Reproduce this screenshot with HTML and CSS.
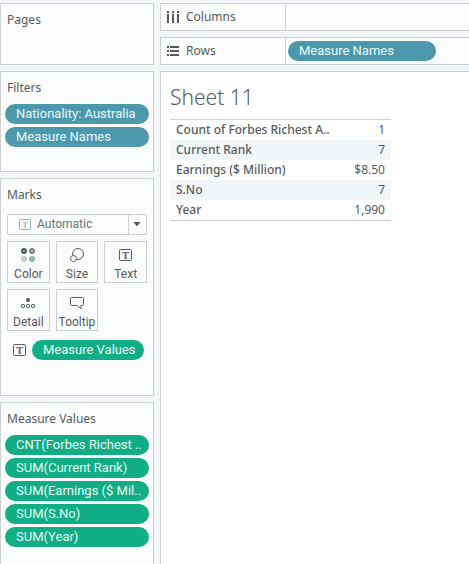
FILE: index.html
```html
<!DOCTYPE html>
<html lang="en">
<head>
<meta charset="utf-8">
<title>Sheet 11</title>
<link rel="stylesheet" href="styles.css">
</head>
<body>
<div class="workspace">
  <aside class="sidebar">
    <section class="card pages">
      <h2 class="card-title">Pages</h2>
    </section>
    <section class="card filters">
      <h2 class="card-title">Filters</h2>
      <div class="pills">
        <button class="pill blue">Nationality: Australia</button>
        <button class="pill blue">Measure Names</button>
      </div>
    </section>
    <section class="card marks">
      <h2 class="card-title">Marks</h2>
      <div class="mark-type">
        <svg class="type-icon" width="12" height="12" viewBox="0 0 12 12" aria-hidden="true"><rect x=".5" y=".5" width="11" height="10" rx="1"/><text x="6" y="9">T</text></svg>
        <select class="type-select" aria-label="Mark type"><option>Automatic</option></select>
        <svg class="caret" width="8" height="5" viewBox="0 0 8 5" aria-hidden="true"><path d="M.5 0h7L4 4.500z"/></svg>
      </div>
      <div class="tiles">
        <button class="tile">
          <svg width="16" height="16" viewBox="0 0 16 16" aria-hidden="true"><circle cx="4" cy="4" r="3" fill="#555b5d"/><circle cx="12" cy="4" r="3" fill="#748484"/><circle cx="4" cy="12" r="3" fill="#c3c9c8"/><circle cx="12" cy="12" r="3" fill="#8bb5b0"/><path d="M3 4h2M11 4h2M12 3v2M3 12h2" stroke="#d5dddd" fill="none"/></svg>
          <span>Color</span>
        </button>
        <button class="tile">
          <svg class="line" width="16" height="16" viewBox="0 0 16 16" aria-hidden="true"><circle cx="9" cy="7" r="5.500"/><circle cx="4.500" cy="11.500" r="3" fill="#fafcfc"/></svg>
          <span>Size</span>
        </button>
        <button class="tile">
          <svg class="line" width="16" height="16" viewBox="0 0 16 16" aria-hidden="true"><rect x="1.500" y="2.500" width="12" height="11" rx="1"/><text x="7.500" y="11.500">T</text></svg>
          <span>Text</span>
        </button>
        <button class="tile">
          <svg class="line" width="16" height="16" viewBox="0 0 16 16" aria-hidden="true"><circle cx="8" cy="5" r="2" fill="#555b5d" stroke="none"/><circle cx="3" cy="11" r="1.700"/><circle cx="8" cy="11" r="1.700"/><circle cx="13" cy="11" r="1.700"/></svg>
          <span>Detail</span>
        </button>
        <button class="tile">
          <svg class="line" width="16" height="16" viewBox="0 0 16 16" aria-hidden="true"><path d="M2.500 2.500h11q1 0 1 1v6q0 1-1 1h-1.500v3.500l-3.500-3.500h-6q-1 0-1-1v-6q0-1 1-1z"/></svg>
          <span>Tooltip</span>
        </button>
      </div>
      <div class="mark-row">
        <svg class="line" width="14" height="14" viewBox="0 0 14 14" aria-hidden="true"><rect x=".5" y="1.500" width="12" height="11" rx="1"/><text x="6.500" y="10.500">T</text></svg>
        <button class="pill green">Measure Values</button>
      </div>
    </section>
    <section class="card values">
      <h2 class="card-title">Measure Values</h2>
      <div class="pills">
        <button class="pill green">CNT(Forbes Richest ..</button>
        <button class="pill green">SUM(Current Rank)</button>
        <button class="pill green">SUM(Earnings ($ Mil..</button>
        <button class="pill green">SUM(S.No)</button>
        <button class="pill green">SUM(Year)</button>
      </div>
    </section>
  </aside>
  <main class="main">
    <section class="shelf">
      <h2 class="shelf-name">
        <svg width="12" height="12" viewBox="0 0 12 12" aria-hidden="true"><path d="M0 0h2v2H0zM5 0h2v2H5zM10 0h2v2h-2zM0 3h2v9H0zM5 3h2v9H5zM10 3h2v9h-2z"/></svg>
        Columns
      </h2>
      <div class="shelf-drop"></div>
    </section>
    <section class="shelf">
      <h2 class="shelf-name">
        <svg width="12" height="12" viewBox="0 0 12 12" aria-hidden="true"><path d="M0 1h2v2H0zM0 5h2v2H0zM0 9h2v2H0zM3 1h9v2H3zM3 5h9v2H3zM3 9h9v2H3z"/></svg>
        Rows
      </h2>
      <div class="shelf-drop"><button class="pill blue">Measure Names</button></div>
    </section>
    <section class="sheet">
      <h1 class="sheet-title">Sheet 11</h1>
      <table class="data">
        <tbody>
          <tr><th scope="row">Count of Forbes Richest A..</th><td>1</td></tr>
          <tr><th scope="row">Current Rank</th><td>7</td></tr>
          <tr><th scope="row">Earnings ($ Million)</th><td>$8.50</td></tr>
          <tr><th scope="row">S.No</th><td>7</td></tr>
          <tr><th scope="row">Year</th><td>1,990</td></tr>
        </tbody>
      </table>
    </section>
  </main>
</div>
</body>
</html>
```
FILE: styles.css
```css
* { box-sizing: border-box; }
body {
  margin: 0;
  background: #f2f6f8;
  color: #555b5d;
  font: 12px/20px "Noto Sans", "Open Sans", sans-serif;
}
h1, h2 { margin: 0; font-weight: 400; }
button { font: inherit; color: inherit; cursor: pointer; }
.workspace {
  display: grid;
  grid-template-columns: 154px minmax(0, 1fr);
  gap: 6px;
  min-height: 100vh;
  padding-top: 3px;
  overflow: hidden;
}
.sidebar, .main { display: flex; flex-direction: column; gap: 6px; }
.card {
  padding: 6px 4px;
  border: 1px solid #cdd0d1;
  background: #fafcfc;
}
.card-title { padding-left: 2px; font-size: 12px; }
.pages { min-height: 62px; }
.filters { min-height: 101px; }
.marks { min-height: 218px; padding: 6px; }
.marks .card-title { padding-left: 0; }
.values { flex: 1; border-bottom: 0; }
.pills {
  display: grid;
  grid-template-columns: minmax(0, 1fr);
  gap: 3px;
  margin-top: 6px;
}
.pill {
  height: 20px;
  padding: 0 11px;
  border: 0;
  border-radius: 10px;
  color: #e4fbf9;
  font: 13px/20px Roboto, sans-serif;
  text-align: left;
  white-space: nowrap;
}
.blue { background: #4e98ae; }
.green { background: #11ad84; }
.mark-type {
  display: grid;
  grid-template-columns: 11px 12px 1fr 18px;
  align-items: center;
  height: 21px;
  margin-top: 9px;
  border: 1px solid #cdd0d1;
  border-radius: 2px;
}
.type-icon, .type-select, .caret { grid-row: 1; }
.type-icon { grid-column: 2; fill: none; stroke: #8bb5b0; }
.type-icon text { font: 9px "Liberation Serif", serif; text-anchor: middle; fill: #7fa5a1; stroke: none; }
.type-select {
  grid-column: 1 / -1;
  width: 100%;
  height: 19px;
  padding: 0 20px 0 29px;
  border: 0;
  background: linear-gradient(#cdd0d1, #cdd0d1) right 17px top / 1px 100% no-repeat;
  color: #687678;
  font: 12px/19px Roboto, sans-serif;
  appearance: none;
}
.caret { grid-column: 4; justify-self: center; fill: #555b5d; pointer-events: none; }
.tiles {
  display: grid;
  grid-template-columns: repeat(3, 1fr);
  gap: 6px;
  margin-top: 6px;
}
.tile {
  display: flex;
  flex-direction: column;
  align-items: center;
  gap: 2px;
  height: 42px;
  padding: 5px 0 0;
  border: 1px solid #cdd0d1;
  background: #fafcfc;
  font: 12px/18px Roboto, sans-serif;
}
.tile svg, .mark-row svg { flex: none; }
.line { fill: none; stroke: #555b5d; }
.line text { font: bold 10px "Liberation Serif", serif; text-anchor: middle; fill: #555b5d; stroke: none; }
.mark-row { display: flex; align-items: center; gap: 5px; margin: 9px 3px 0 6px; }
.mark-row .pill { flex: 1; min-width: 0; }
.shelf {
  display: grid;
  grid-template-columns: 125px 1fr;
  height: 28px;
  border: 1px solid #cdd0d1;
  border-right: 0;
  background: #fafcfc;
}
.shelf-name {
  display: flex;
  align-items: center;
  gap: 7px;
  padding-left: 6px;
  border-right: 1px solid #cdd0d1;
  font-size: 12px;
}
.shelf-name svg { fill: #555b5d; }
.shelf-drop { display: flex; align-items: center; padding-left: 2px; }
.shelf-drop .pill { width: 148px; }
.sheet {
  flex: 1;
  padding: 10px 9px;
  border: 1px solid #cdd0d1;
  border-width: 1px 0 0 1px;
  background: #fff;
}
.sheet-title { font: 300 21px/31px "Noto Sans", sans-serif; }
.data {
  width: 221px;
  margin-top: 6px;
  border: 1px solid #cdd0d1;
  border-width: 1px 0;
  border-spacing: 0;
}
.data th, .data td { height: 20px; padding: 0 6px; }
.data th { text-align: left; font-weight: 500; }
.data td { text-align: right; }
.data tr:nth-child(even) { background: #f2f6f8; }
```
